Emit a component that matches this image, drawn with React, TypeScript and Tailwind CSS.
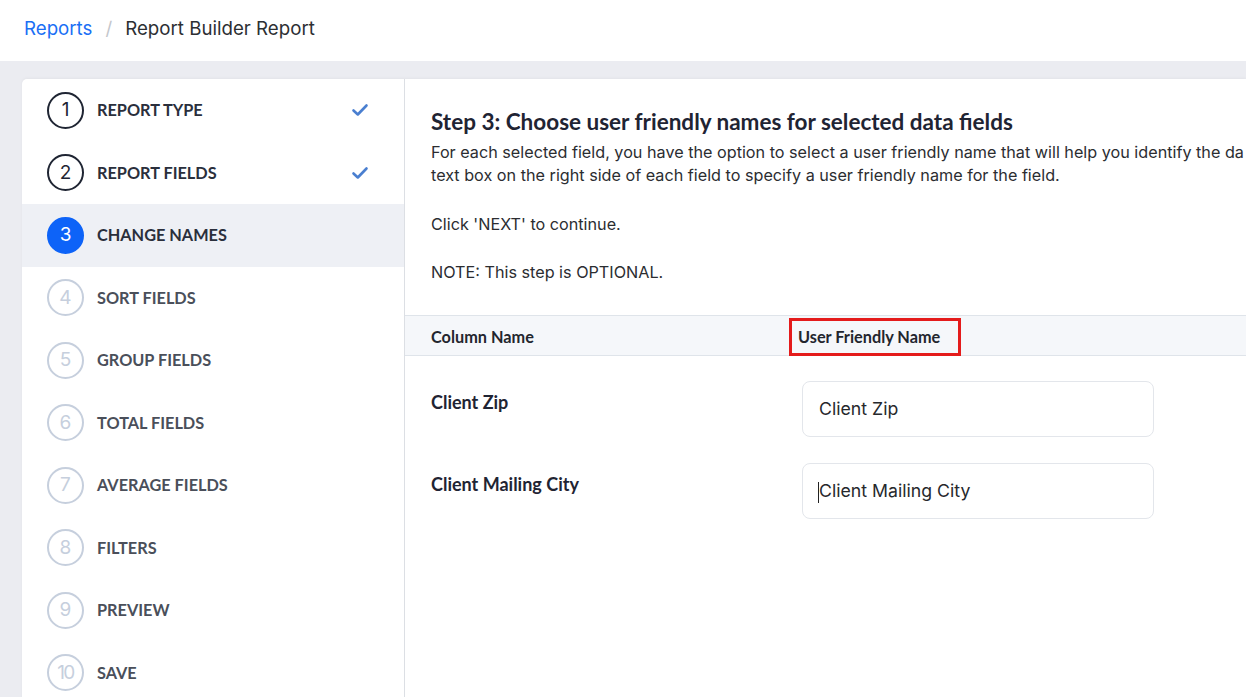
import React from 'react';

type Step = {
    n: number;
    label: string;
    state: 'done' | 'active' | 'todo';
};

const steps: Step[] = [
    { n: 1, label: 'REPORT TYPE', state: 'done' },
    { n: 2, label: 'REPORT FIELDS', state: 'done' },
    { n: 3, label: 'CHANGE NAMES', state: 'active' },
    { n: 4, label: 'SORT FIELDS', state: 'todo' },
    { n: 5, label: 'GROUP FIELDS', state: 'todo' },
    { n: 6, label: 'TOTAL FIELDS', state: 'todo' },
    { n: 7, label: 'AVERAGE FIELDS', state: 'todo' },
    { n: 8, label: 'FILTERS', state: 'todo' },
    { n: 9, label: 'PREVIEW', state: 'todo' },
    { n: 10, label: 'SAVE', state: 'todo' },
];

const fields = ['Client Zip', 'Client Mailing City'];

function Check() {
    return (
        <svg width="18" height="14" viewBox="0 0 18 14" fill="none">
            <path d="M2.5 7.5 L6.8 11.5 L15.5 2.5" stroke="#4a7fd0" strokeWidth="2.6" strokeLinecap="round" strokeLinejoin="round" />
        </svg>
    );
}

function StepRow({ step }: { step: Step }) {
    const circle =
        step.state === 'active'
            ? 'bg-[#0d63f8] border-[#0d63f8] text-white'
            : step.state === 'done'
            ? 'border-[#1f2533] text-[#1f2533]'
            : 'border-[#c6cfdd] text-[#c6cfdd]';
    const label = step.state === 'todo' ? 'text-[#4a4f5a]' : 'text-[#2a2f3c]';
    return (
        <div className={`flex items-center h-[62.5px] pl-[25px] pr-[35px] ${step.state === 'active' ? 'bg-[#eef0f5]' : ''}`}>
            <div
                className={`flex items-center justify-center w-[37px] h-[37px] rounded-full border-2 font-['Inter'] text-[19px] ${
                    step.n === 10 ? 'tracking-[-1.5px]' : ''
                } ${circle}`}
            >
                {step.n}
            </div>
            <span className={`ml-[13px] font-['Lato'] font-bold text-[16.3px] ${label}`}>{step.label}</span>
            <span className="ml-auto">{step.state === 'done' && <Check />}</span>
        </div>
    );
}

export default function App() {
    return (
        <div className="w-[1246px] h-[697px] overflow-hidden bg-[#ebecf1] font-['Inter',sans-serif]">
            <header className="h-[61px] bg-white flex items-center px-6 pb-[2px] text-[18.7px]">
                <a className="text-[#1a6ff5]">Reports</a>
                <span className="mx-[13px] text-[#c4c7cc]">/</span>
                <span className="text-[#2d2f33]">Report Builder Report</span>
            </header>
            <div className="pt-[18px] pl-[22px]">
                <div className="flex bg-white rounded-tl-[5px] shadow-[0_-1px_3px_rgba(0,0,0,0.04)] h-[640px]">
                    <aside className="w-[383px] shrink-0 border-r border-[#dcdfe4]">
                        {steps.map((s) => (
                            <StepRow key={s.n} step={s} />
                        ))}
                    </aside>
                    <main className="flex-1 min-w-0 overflow-hidden">
                        <div className="pl-[26px] pt-[28px] pb-[31px] whitespace-nowrap">
                            <h2 className="font-['Lato'] font-bold text-[22.5px] text-[#1f2433] leading-[30px]">
                                Step 3: Choose user friendly names for selected data fields
                            </h2>
                            <div className="text-[16.2px] leading-[23px] text-[#2b2d31] mt-[4px]">
                                <p>For each selected field, you have the option to select a user friendly name that will help you identify the da</p>
                                <p>text box on the right side of each field to specify a user friendly name for the field.</p>
                                <p className="mt-[26px]">Click 'NEXT' to continue.</p>
                                <p className="mt-[25px]">NOTE: This step is OPTIONAL.</p>
                            </div>
                        </div>
                        <div className="grid grid-cols-[371px_1fr] items-center h-[41px] bg-[#f5f7fa] border-t border-b border-[#dfe4ea] pl-[26px]">
                            <span className="font-['Lato'] font-bold text-[16.3px] text-[#23262e] mt-[2px]">Column Name</span>
                            <div className="-ml-[13px] mt-[2px] h-[38px] w-[172px] border-[3px] border-[#e41b1b] flex items-center pl-[6px]">
                                <span className="font-['Lato'] font-bold text-[16.3px] text-[#23262e] whitespace-nowrap">User Friendly Name</span>
                            </div>
                        </div>
                        <div className="pt-[25px] flex flex-col gap-[26px]">
                            {fields.map((f, i) => (
                                <div key={f} className="grid grid-cols-[371px_1fr] pl-[26px] items-start">
                                    <span className="font-['Lato'] font-bold text-[18px] text-[#1f2433] mt-[8px]">{f}</span>
                                    <div className="relative w-[352px] h-[56px] rounded-[8px] border border-[#e3e6eb] flex items-center px-4 text-[17.7px] text-[#26282c]">
                                        {i === 1 && <span className="absolute left-[15px] top-[18px] w-px h-[21px] bg-[#222]" />}
                                        {f}
                                    </div>
                                </div>
                            ))}
                        </div>
                    </main>
                </div>
            </div>
        </div>
    );
}
